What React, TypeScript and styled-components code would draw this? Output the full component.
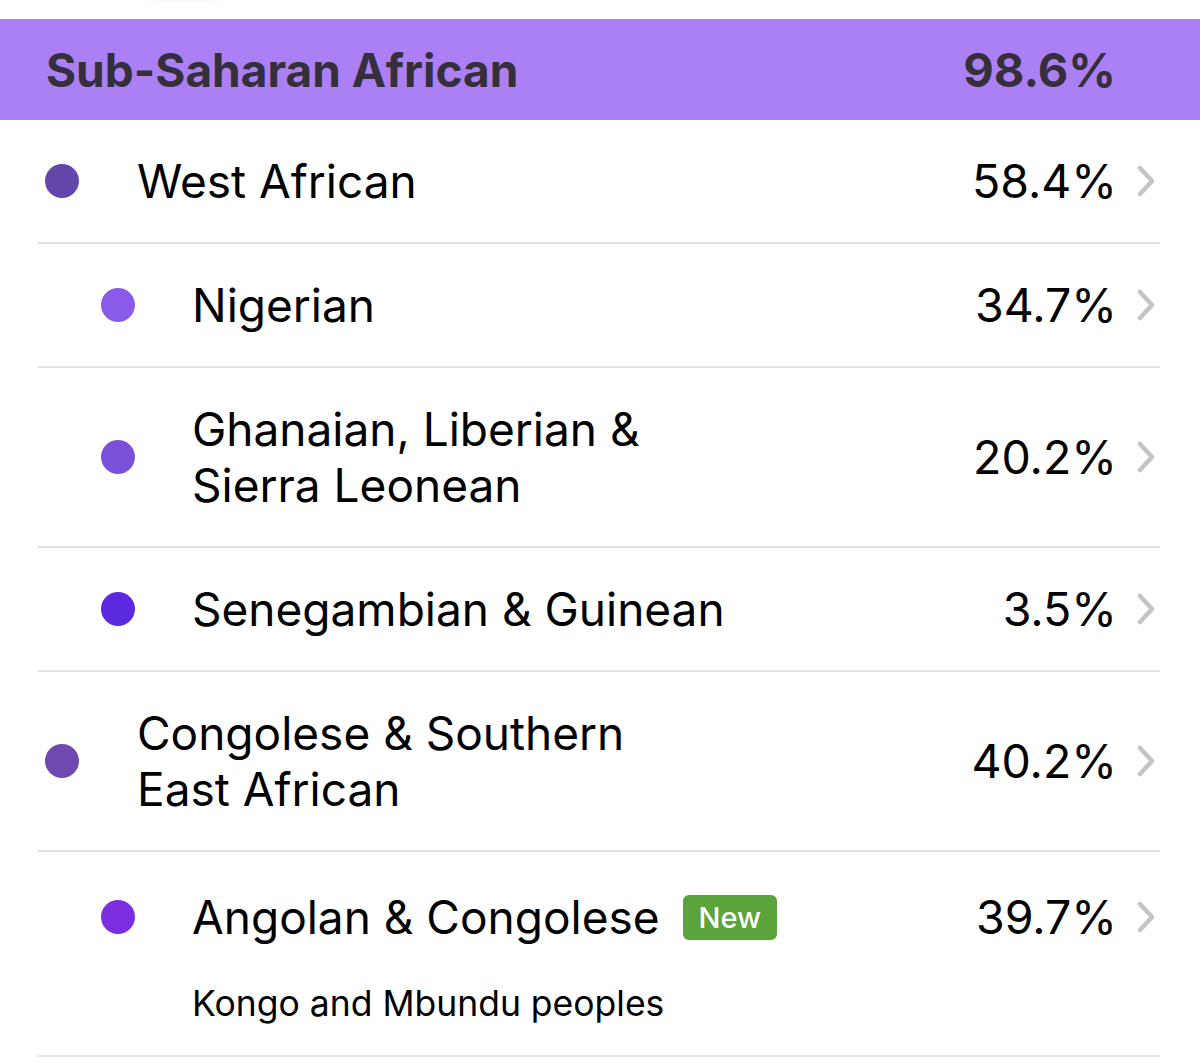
import React from "react";
import styled, { createGlobalStyle } from "styled-components";

interface IAncestry {
  name: string;
  percent: string;
  level: 0 | 1;
  color: string;
  isNew?: boolean;
  note?: string;
}

const rows: IAncestry[] = [
  { name: "West African", percent: "58.4%", level: 0, color: "#6346a9" },
  { name: "Nigerian", percent: "34.7%", level: 1, color: "#8a5ae8" },
  { name: "Ghanaian, Liberian & Sierra Leonean", percent: "20.2%", level: 1, color: "#7a50d9" },
  { name: "Senegambian & Guinean", percent: "3.5%", level: 1, color: "#5a29e0" },
  { name: "Congolese & Southern East African", percent: "40.2%", level: 0, color: "#7049b0" },
  {
    name: "Angolan & Congolese",
    percent: "39.7%",
    level: 1,
    color: "#7b2fe0",
    isNew: true,
    note: "Kongo and Mbundu peoples",
  },
];

function Chevron() {
  return (
    <ChevronIcon width="18" height="32" viewBox="0 0 18 32" aria-hidden>
      <path
        d="M3 3 L15 16 L3 29"
        fill="none"
        stroke="#c5c5c8"
        strokeWidth="4.5"
        strokeLinecap="round"
        strokeLinejoin="round"
      />
    </ChevronIcon>
  );
}

function AncestryRow({ name, percent, level, color, isNew, note }: IAncestry) {
  return (
    <Row $withNote={!!note}>
      <MainLine>
        <Dot $level={level} $color={color} />
        <Name>{name}</Name>
        {isNew && <Badge>New</Badge>}
        <Percent>{percent}</Percent>
        <Chevron />
      </MainLine>
      {note && <Note $level={level}>{note}</Note>}
    </Row>
  );
}

export default function App() {
  return (
    <>
      <GlobalStyle />
      <Page>
        <TopStrip>
          <Shade />
        </TopStrip>
        <RegionHeader>
          <RegionTitle>Sub-Saharan African</RegionTitle>
          <RegionPercent>98.6%</RegionPercent>
        </RegionHeader>
        <List>
          {rows.map((r) => (
            <AncestryRow key={r.name} {...r} />
          ))}
        </List>
      </Page>
    </>
  );
}

const GlobalStyle = createGlobalStyle`
  html, body {
    margin: 0;
    padding: 0;
    background: #ffffff;
  }
  body {
    font-family: Inter, "Noto Sans", "Liberation Sans", sans-serif;
    color: #000000;
    -webkit-font-smoothing: antialiased;
  }
`;

const Page = styled.div`
  width: 1200px;
  height: 1063px;
  overflow: hidden;
  background: #ffffff;
`;

const TopStrip = styled.div`
  height: 19px;
  position: relative;
  overflow: hidden;
`;

const Shade = styled.div`
  position: absolute;
  left: 110px;
  top: -30px;
  width: 150px;
  height: 36px;
  border-radius: 50%;
  background: radial-gradient(ellipse at center, rgba(0, 0, 0, 0.08), rgba(0, 0, 0, 0) 70%);
`;

const RegionHeader = styled.div`
  height: 101px;
  background: #ab80f5;
  display: flex;
  align-items: center;
  justify-content: space-between;
  padding: 0 84px 0 46px;
  box-sizing: border-box;
  color: #342f3b;
`;

const RegionTitle = styled.div`
  font-size: 46px;
  font-weight: 700;
`;

const RegionPercent = styled.div`
  font-size: 47px;
  font-weight: 700;
`;

const List = styled.div`
  padding: 0 40px 0 38px;
`;

const Row = styled.div<{ $withNote: boolean }>`
  display: flex;
  flex-direction: column;
  padding: ${({ $withNote }) => ($withNote ? "37px 5px 31px 0" : "33px 5px 33px 0")};
  border-bottom: 2px solid #e2e2e6;
`;

const MainLine = styled.div`
  display: flex;
  align-items: center;
`;

const Dot = styled.span<{ $level: number; $color: string }>`
  flex: none;
  width: 34px;
  height: 34px;
  border-radius: 50%;
  background: ${({ $color }) => $color};
  margin-left: ${({ $level }) => ($level === 0 ? 7 : 63)}px;
  margin-right: ${({ $level }) => ($level === 0 ? 58 : 57)}px;
`;

const Name = styled.div`
  font-size: 46px;
  line-height: 56px;
  max-width: 540px;
`;

const Badge = styled.span`
  flex: none;
  margin-left: 23px;
  background: #5ba43b;
  color: #ffffff;
  font-size: 29px;
  font-weight: 500;
  line-height: 45px;
  padding: 0 16px;
  border-radius: 6px;
`;

const Percent = styled.div`
  margin-left: auto;
  font-size: 46.5px;
  line-height: 56px;
`;

const ChevronIcon = styled.svg`
  flex: none;
  margin-left: 20px;
`;

const Note = styled.div<{ $level: number }>`
  margin-top: 39px;
  padding-left: ${({ $level }) => ($level === 0 ? 99 : 154)}px;
  font-size: 35.5px;
  line-height: 40px;
`;
